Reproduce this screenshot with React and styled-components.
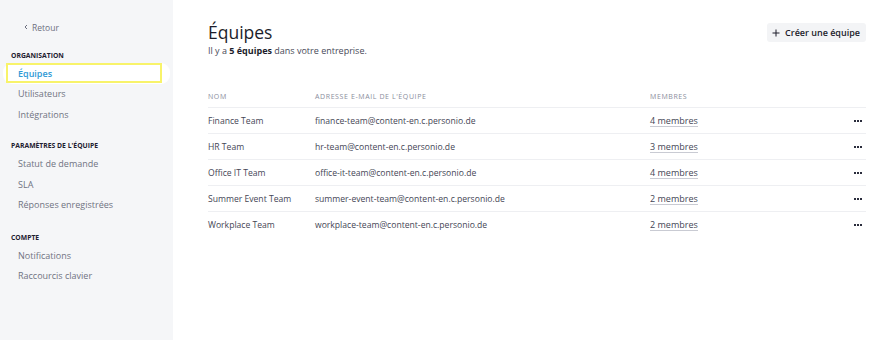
import React from "react";
import styled, { createGlobalStyle } from "styled-components";

const Global = createGlobalStyle`
  html, body { margin: 0; padding: 0; background: #fff; }
  body { font-family: "Open Sans", "Noto Sans", sans-serif; -webkit-font-smoothing: antialiased; }
  * { box-sizing: border-box; }
`;

const Page = styled.div`
  display: flex;
  width: 890px;
  height: 340px;
  overflow: hidden;
`;

const Sidebar = styled.nav`
  width: 173px;
  flex: none;
  background: #f5f6f8;
  padding: 19px 3px 0 3px;
  display: flex;
  flex-direction: column;
`;

const Back = styled.a`
  display: flex;
  align-items: center;
  gap: 3px;
  padding-left: 20px;
  height: 16px;
  font-size: 8.5px;
  color: #6d7080;
  margin-bottom: 13px;
`;

const Section = styled.div`
  display: flex;
  flex-direction: column;
  margin-bottom: ${(p) => p.$mb || 0}px;
`;

const SectionTitle = styled.div`
  font-size: 6.8px;
  font-weight: 700;
  text-transform: uppercase;
  color: #1e2030;
  padding-left: 8px;
  height: 14px;
  display: flex;
  align-items: center;
  margin-bottom: 1px;
`;

const NavItem = styled.a`
  display: flex;
  align-items: center;
  height: 20.5px;
  padding-left: 15px;
  font-size: 9px;
  color: ${(p) => (p.$active ? "#2f9ad6" : "#707382")};
  font-weight: ${(p) => (p.$active ? 600 : 400)};
  background: ${(p) => (p.$active ? "#fff" : "transparent")};
  border-radius: 9px;
  position: relative;
  &::after {
    content: "";
    display: ${(p) => (p.$active ? "block" : "none")};
    position: absolute;
    left: 3px;
    right: 8px;
    top: 0px;
    bottom: 1px;
    border: 2px solid #f8f36a;
  }
`;

const Main = styled.main`
  flex: 1;
  padding: 20px 24px 0 35px;
  display: flex;
  flex-direction: column;
`;

const Header = styled.div`
  display: flex;
  justify-content: space-between;
  align-items: flex-start;
`;

const Title = styled.h1`
  margin: 0;
  font-size: 17.5px;
  font-weight: 400;
  color: #1c1d2b;
  line-height: 24px;
`;

const Sub = styled.p`
  margin: 0;
  font-size: 9px;
  line-height: 13px;
  color: #474958;
  b { font-weight: 700; color: #1c1d2b; }
`;

const Button = styled.button`
  margin-top: 3px;
  height: 19px;
  border: none;
  background: #f3f4f6;
  border-radius: 3px;
  padding: 0 6px 0 5px;
  display: flex;
  align-items: center;
  gap: 5px;
  font-family: inherit;
  font-size: 9px;
  font-weight: 600;
  color: #1c1d2b;
`;

const Table = styled.div`
  margin-top: 28px;
  display: flex;
  flex-direction: column;
`;

const Row = styled.div`
  display: grid;
  grid-template-columns: 107px 335px 1fr 20px;
  align-items: center;
  height: ${(p) => (p.$head ? 23 : 26)}px;
  border-bottom: 1px solid #eeeff2;
  font-size: ${(p) => (p.$head ? "7px" : "8.6px")};
  color: ${(p) => (p.$head ? "#8a8d9c" : "#444655")};
  letter-spacing: ${(p) => (p.$head ? "0.6px" : "0")};
  text-transform: ${(p) => (p.$head ? "uppercase" : "none")};
  &:last-child { border-bottom: none; }
`;

const Members = styled.span`
  justify-self: start;
  font-size: 9px;
  border-bottom: 1px solid #c9cbd3;
  line-height: 11px;
`;

const Dots = styled.span`
  justify-self: end;
  display: flex;
  gap: 1px;
  margin-right: 4px;
  i {
    width: 2px;
    height: 2px;
    background: #2b2d3c;
    display: block;
  }
`;

const teams = [
  ["Finance Team", "finance-team@content-en.c.personio.de", 4],
  ["HR Team", "hr-team@content-en.c.personio.de", 3],
  ["Office IT Team", "office-it-team@content-en.c.personio.de", 4],
  ["Summer Event Team", "summer-event-team@content-en.c.personio.de", 2],
  ["Workplace Team", "workplace-team@content-en.c.personio.de", 2],
];

export default function App() {
  return (
    <>
      <Global />
      <Page>
        <Sidebar>
          <Back>
            <svg width="6" height="6" viewBox="0 0 6 6">
              <path d="M4 1 L2 3 L4 5" fill="none" stroke="#6d7080" strokeWidth="1" />
            </svg>
            Retour
          </Back>
          <Section $mb={14}>
            <SectionTitle>Organisation</SectionTitle>
            <NavItem $active>Équipes</NavItem>
            <NavItem>Utilisateurs</NavItem>
            <NavItem>Intégrations</NavItem>
          </Section>
          <Section $mb={15}>
            <SectionTitle>Paramètres de l'équipe</SectionTitle>
            <NavItem>Statut de demande</NavItem>
            <NavItem>SLA</NavItem>
            <NavItem>Réponses enregistrées</NavItem>
          </Section>
          <Section>
            <SectionTitle>Compte</SectionTitle>
            <NavItem>Notifications</NavItem>
            <NavItem>Raccourcis clavier</NavItem>
          </Section>
        </Sidebar>
        <Main>
          <Header>
            <div>
              <Title>Équipes</Title>
              <Sub>
                Il y a <b>5 équipes</b> dans votre entreprise.
              </Sub>
            </div>
            <Button>
              <svg width="8" height="8" viewBox="0 0 8 8">
                <path d="M4 0.5 V7.5 M0.5 4 H7.5" stroke="#1c1d2b" strokeWidth="1" />
              </svg>
              Créer une équipe
            </Button>
          </Header>
          <Table>
            <Row $head>
              <span>Nom</span>
              <span>Adresse e-mail de l'équipe</span>
              <span>Membres</span>
              <span />
            </Row>
            {teams.map(([name, email, n]) => (
              <Row key={name}>
                <span>{name}</span>
                <span>{email}</span>
                <Members>{n} membres</Members>
                <Dots>
                  <i />
                  <i />
                  <i />
                </Dots>
              </Row>
            ))}
          </Table>
        </Main>
      </Page>
    </>
  );
}
